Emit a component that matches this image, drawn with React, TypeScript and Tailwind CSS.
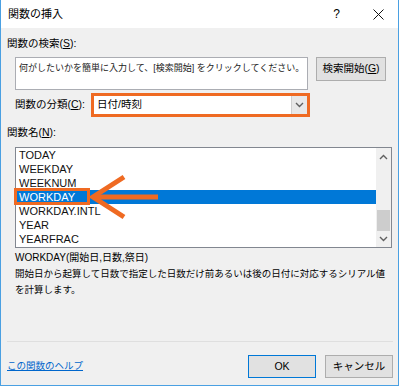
import React from 'react';

const items = ['TODAY', 'WEEKDAY', 'WEEKNUM', 'WORKDAY', 'WORKDAY.INTL', 'YEAR', 'YEARFRAC'];

const Chevron = ({ up }: { up?: boolean }) => (
  <svg width="9" height="6" viewBox="0 0 9 6" className="block">
    <polyline
      points={up ? '1,5 4.5,1.5 8,5' : '1,1 4.5,4.5 8,1'}
      fill="none"
      stroke="#606060"
      strokeWidth="1.4"
    />
  </svg>
);

const App = () => {
  return (
    <div className="w-[400px] h-[387px] bg-white text-black font-['Liberation_Sans','Noto_Sans_CJK_JP',sans-serif]">
      <div className="w-[399px] h-[386px] border-x border-b border-[#4aa0e2] flex flex-col">
        {/* title bar */}
        <div className="h-[28px] bg-white flex items-center pl-[7px] shrink-0">
          <span className="text-[11px] leading-none">関数の挿入</span>
          <span className="ml-auto text-[12px] leading-none">?</span>
          <svg width="11" height="11" viewBox="0 0 11 11" className="ml-[33px] mr-[14px]">
            <path d="M0.5 0.5 L10.5 10.5 M10.5 0.5 L0.5 10.5" stroke="#111" strokeWidth="1" />
          </svg>
        </div>

        {/* body */}
        <div className="flex-1 bg-[#f0f0f0] flex flex-col pl-[6px]">
          <div className="mt-[9px] h-[14px] flex items-center text-[10.5px]">
            関数の検索(<span className="underline">S</span>):
          </div>

          <div className="mt-[6px] ml-[8px] flex items-start">
            <div className="w-[293px] h-[33px] bg-white border border-[#abadb3] px-[3px] pt-[3px] text-[9px] leading-[14px] text-[#222] whitespace-nowrap">
              何がしたいかを簡単に入力して、[検索開始] をクリックしてください。
            </div>
            <button className="ml-[8px] w-[70px] h-[24px] bg-[#e1e1e1] border border-[#adadad] text-[10.5px] flex items-center justify-center">
              検索開始(<span className="underline">G</span>)
            </button>
          </div>

          <div className="mt-[3px] ml-[8px] flex items-center h-[24px]">
            <span className="w-[76px] text-[10.5px] whitespace-nowrap">
              関数の分類(<span className="underline">C</span>):
            </span>
            <div className="w-[219px] h-[24px] border-[3px] border-[#ef6a22] bg-white flex items-center">
              <span className="pl-[3px] text-[10.5px] flex-1">日付/時刻</span>
              <div className="w-[16px] h-full bg-[#e8e8e8] border-l border-[#d0d0d0] flex items-center justify-center">
                <Chevron />
              </div>
            </div>
          </div>

          <div className="mt-[9px] h-[14px] flex items-center text-[10.5px]">
            関数名(<span className="underline">N</span>):
          </div>

          <div className="mt-[7px] ml-[8px] relative w-[377px]">
            <div className="h-[101px] border border-[#828790] bg-white flex">
              <div className="flex-1 flex flex-col">
                {items.map((item) => (
                  <div
                    key={item}
                    className={
                      item === 'WORKDAY'
                        ? 'h-[14px] pl-[3px] flex items-center text-[11px] bg-[#0078d7] text-white'
                        : 'h-[14px] pl-[3px] flex items-center text-[11px] text-[#111]'
                    }
                  >
                    {item}
                  </div>
                ))}
              </div>
              <div className="w-[15px] bg-[#f0f0f0] flex flex-col items-center">
                <div className="h-[17px] flex items-center justify-center">
                  <Chevron up />
                </div>
                <div className="flex-1 w-full relative">
                  <div className="absolute left-[1px] right-[1px] top-[45px] h-[21px] bg-[#cdcdcd]" />
                </div>
                <div className="h-[17px] flex items-center justify-center">
                  <Chevron />
                </div>
              </div>
            </div>
            {/* highlight overlay */}
            <div className="absolute left-[-1px] top-[41px] w-[76px] h-[17px] border-[3px] border-[#ef6a22]" />
            <svg
              width="80"
              height="50"
              viewBox="0 0 80 50"
              className="absolute left-[70px] top-[25px] overflow-visible"
            >
              <polyline points="39,5 8,25 39,45" fill="none" stroke="#ef6a22" strokeWidth="5" strokeLinejoin="miter" />
              <line x1="10" y1="25" x2="73" y2="25" stroke="#ef6a22" strokeWidth="5" />
            </svg>
          </div>

          <div className="mt-[2px] ml-[8px] text-[10px] leading-[16px] whitespace-nowrap">
            <div>WORKDAY(開始日,日数,祭日)</div>
            <div className="text-[9.5px]">
              開始日から起算して日数で指定した日数だけ前あるいは後の日付に対応するシリアル値
              <br />
              を計算します。
            </div>
          </div>

          <div className="flex-1" />

          <div className="h-px bg-[#dfdfdf] mr-[5px]" />

          <div className="mt-[13px] mb-[7px] mr-[5px] h-[23px] flex items-center">
            <a href="#" className="text-[9.5px] text-[#0066cc] underline">
              この関数のヘルプ
            </a>
            <button className="ml-auto w-[68px] h-[23px] bg-[#e1e1e1] border border-[#0078d7] text-[10.5px]">
              OK
            </button>
            <button className="ml-[9px] w-[68px] h-[23px] bg-[#e1e1e1] border border-[#adadad] text-[10.5px]">
              キャンセル
            </button>
          </div>
        </div>
      </div>
    </div>
  );
};

export default App;
